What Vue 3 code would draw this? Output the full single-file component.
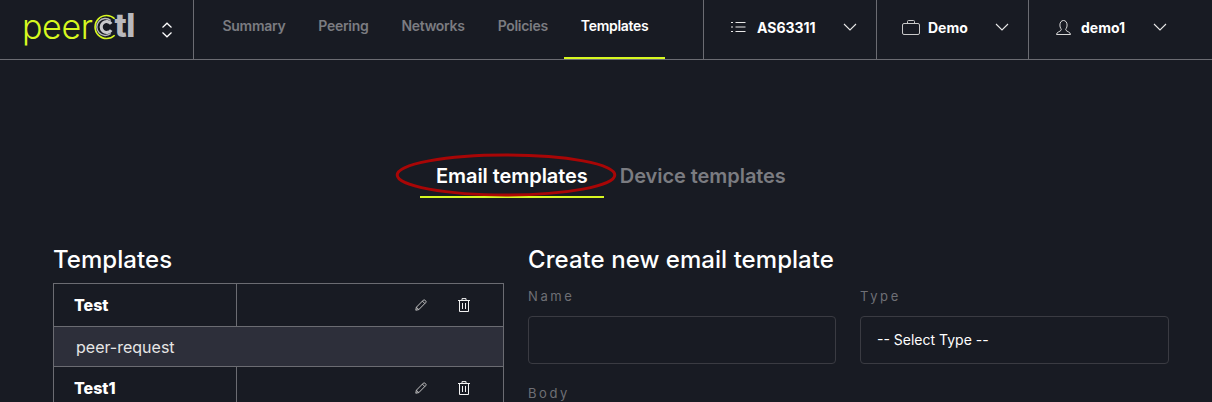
<script setup>
const links = ['Summary', 'Peering', 'Networks', 'Policies', 'Templates']
const templates = [
  { name: 'Test', type: 'peer-request' },
  { name: 'Test1', type: '' },
]
</script>

<template>
  <header class="topbar">
    <div class="brand">
      <div class="logo">
        <span class="logo-peer">peer</span>
        <svg class="logo-c" width="26" height="26" viewBox="0 0 30 30" fill="none" aria-hidden="true">
          <path d="M25 5.500A13.300 13.300 0 1 0 25 24.500" stroke="#d7f820" stroke-width="1.900" />
          <path d="M20.500 7.500A9.800 9.800 0 1 0 20.500 22.500" stroke="#b9b9bd" stroke-width="1.600" />
          <path d="M21 11.500A6.300 6.300 0 1 0 21 18.500" stroke="#c9c9cc" stroke-width="3.600" />
        </svg>
        <span class="logo-tl">tl</span>
      </div>
      <svg class="updown" width="12" height="16" viewBox="0 0 12 16" fill="none" aria-hidden="true">
        <path d="M1.500 5.500 6 1.200l4.500 4.300M1.500 10.500 6 14.800l4.500-4.300" stroke="#fff" stroke-width="1.200" />
      </svg>
    </div>

    <nav class="links">
      <a v-for="link in links" :key="link" class="link" :class="{ active: link === 'Templates' }">{{ link }}</a>
    </nav>

    <div class="menu menu-as">
      <svg width="15" height="12" viewBox="0 0 15 12" fill="none" stroke="#e8e8e8" aria-hidden="true">
        <path d="M0 1.500h2M0 6h2M0 10.500h2M4.500 1.500h10M4.500 6h10M4.500 10.500h10" />
      </svg>
      <span class="menu-text">AS63311</span>
      <svg class="chev" width="14" height="8" viewBox="0 0 14 8" fill="none" aria-hidden="true"><path d="M1 1l6 6 6-6" stroke="#e8e8e8" stroke-width="1.100" /></svg>
    </div>
    <div class="menu menu-demo">
      <svg width="18" height="15" viewBox="0 0 18 15" fill="none" stroke="#c9c9c9" aria-hidden="true">
        <rect x="0.500" y="3.500" width="17" height="11" rx="1.500" />
        <path d="M5.500 3.500V1.500a1 1 0 0 1 1-1h5a1 1 0 0 1 1 1v2" />
      </svg>
      <span class="menu-text">Demo</span>
      <svg class="chev" width="14" height="8" viewBox="0 0 14 8" fill="none" aria-hidden="true"><path d="M1 1l6 6 6-6" stroke="#e8e8e8" stroke-width="1.100" /></svg>
    </div>
    <div class="menu menu-user">
      <svg width="15" height="15" viewBox="0 0 15 15" fill="none" stroke="#d8d8d8" aria-hidden="true">
        <path d="M.5 14.500h14c0-2.500-3.600-2.800-4.600-4.300-.3-.5-.2-1 .2-1.600.7-1 1-2 1-3.600C11.100 2.300 9.600.5 7.500.5S3.900 2.300 3.900 5c0 1.600.3 2.600 1 3.600.4.600.5 1.100.2 1.600-1 1.500-4.600 1.800-4.600 4.300z" />
      </svg>
      <span class="menu-text">demo1</span>
      <svg class="chev" width="14" height="8" viewBox="0 0 14 8" fill="none" aria-hidden="true"><path d="M1 1l6 6 6-6" stroke="#e8e8e8" stroke-width="1.100" /></svg>
    </div>
  </header>

  <main class="page">
    <div class="tabs">
      <a class="tab active">Email templates</a>
      <a class="tab">Device templates</a>
      <svg class="marker" width="222" height="44" viewBox="0 0 222 44" fill="none" aria-hidden="true">
        <ellipse cx="111" cy="22" rx="108.800" ry="20" stroke="#a80606" stroke-width="3" />
      </svg>
    </div>

    <div class="columns">
      <section>
        <h2>Templates</h2>
        <div class="table">
          <template v-for="item in templates" :key="item.name">
            <div class="row">
              <div class="cell-name">{{ item.name }}</div>
              <div class="cell-actions">
                <svg width="12" height="12" viewBox="0 0 12 12" fill="none" stroke="#c4c4c4" aria-hidden="true">
                  <path d="M.8 11.200l.6-3L8.400 1.100a1 1 0 0 1 1.400 0l1 1a1 1 0 0 1 0 1.400L3.800 10.600zM1.400 8.200l2.400 2.400M7.400 2.100l2.400 2.400" />
                </svg>
                <svg width="12" height="14" viewBox="0 0 12 14" fill="none" stroke="#f2f2f2" aria-hidden="true">
                  <path d="M0 2.500h12M4 2.500V.6h4v1.900M1.500 2.500v11h9v-11M4.500 5v6M7.500 5v6" />
                </svg>
              </div>
            </div>
            <div v-if="item.type" class="row-type">{{ item.type }}</div>
          </template>
        </div>
      </section>

      <section>
        <h2>Create new email template</h2>
        <div class="fields">
          <div class="field">
            <label>Name</label>
            <div class="control"></div>
          </div>
          <div class="field">
            <label>Type</label>
            <div class="control">-- Select Type --</div>
          </div>
        </div>
        <label class="body-label">Body</label>
      </section>
    </div>
  </main>
</template>

<style>
html,
body {
  background: #181b23;
  overflow: hidden;
}
</style>

<style scoped>
.topbar {
  display: flex;
  height: 59px;
  border-bottom: 1px solid #6b6c72;
  font-family: Inter, sans-serif;
  color: #fff;
}

.brand {
  display: flex;
  align-items: center;
  width: 194px;
  padding-left: 22px;
  box-sizing: border-box;
  border-right: 1px solid #6b6c72;
}

.logo {
  display: flex;
  align-items: center;
  width: 139px;
  height: 30px;
}

.logo-peer {
  color: #d7f820;
  font-size: 34px;
  font-weight: 300;
  letter-spacing: -0.4px;
  line-height: 30px;
  margin-top: -6px;
}

.logo-c {
  flex-shrink: 0;
  margin-left: 0;
  margin-top: -5px;
}

.logo-tl {
  color: #b9b9bd;
  font-size: 32px;
  font-weight: 800;
  line-height: 30px;
  margin-left: -4px;
  margin-top: -7px;
  letter-spacing: -0.5px;
}

.links {
  display: flex;
  width: 509px;
  padding-left: 12px;
  box-sizing: border-box;
}

.link {
  display: flex;
  align-items: center;
  height: 59px;
  padding: 0 16.500px 6px;
  color: #7b7c81;
  font-size: 14px;
  font-weight: 600;
  letter-spacing: -0.3px;
  border-bottom: 2px solid transparent;
  box-sizing: border-box;
}

.link.active {
  color: #fff;
  border-bottom-color: #d7f820;
}

.menu {
  display: flex;
  align-items: center;
  box-sizing: border-box;
  border-left: 1px solid #6b6c72;
  padding-bottom: 5px;
}

.menu-as {
  width: 173px;
  padding-left: 27px;
}

.menu-demo {
  width: 152px;
  padding-left: 25px;
}

.menu-user {
  flex: 1;
  padding-left: 27px;
}

.menu-text {
  margin-left: 10px;
  font-size: 14px;
  font-weight: 700;
}

.menu-as .menu-text {
  margin-left: 11px;
}

.menu-demo .menu-text {
  margin-left: 8px;
}

.chev {
  margin-left: auto;
}

.menu-as .chev {
  margin-right: 19px;
}

.menu-demo .chev {
  margin-right: 19px;
}

.menu-user .chev {
  margin-left: 28px;
}

.page {
  padding: 0 43px 0 53px;
  font-family: Inter, sans-serif;
  color: #fff;
}

.tabs {
  position: relative;
  display: flex;
  width: 381px;
  margin: 95px 0 0 367px;
}

.tab {
  padding: 0 16px;
  height: 43px;
  box-sizing: border-box;
  line-height: 42px;
  font-size: 20px;
  font-weight: 600;
  letter-spacing: -0.06px;
  color: #7b7c81;
  white-space: nowrap;
  border-bottom: 2px solid transparent;
}

.tab.active {
  color: #fff;
  border-bottom-color: #d7f820;
}

.marker {
  position: absolute;
  left: -25px;
  top: -2px;
}

.columns {
  display: grid;
  grid-template-columns: 451px 641px;
  gap: 24px;
  margin-top: 43px;
}

h2 {
  margin: 0;
  height: 43px;
  font-size: 24px;
  font-weight: 500;
  letter-spacing: 0.05px;
  line-height: 38px;
}

.table {
  border: solid #6b6c72;
  border-width: 1px 1px 0;
  margin-top: -1px;
}

.row {
  display: grid;
  grid-template-columns: 182px 1fr;
  height: 42px;
  border-bottom: 1px solid #6b6c72;
}

.cell-name {
  padding-left: 20px;
  line-height: 42px;
  font-size: 16px;
  font-weight: 800;
}

.cell-actions {
  display: flex;
  align-items: center;
  justify-content: flex-end;
  gap: 31px;
  padding-right: 33px;
  border-left: 1px solid #6b6c72;
}

.row-type {
  height: 39px;
  padding-left: 22px;
  line-height: 41px;
  font-size: 16px;
  color: #e6e6e6;
  background: #2d2f3a;
  border-bottom: 1px solid #6b6c72;
}

.fields {
  display: grid;
  grid-template-columns: 308px 309px;
  gap: 24px;
  margin-top: 4px;
}

label {
  display: block;
  color: #6e6f75;
  font-size: 13px;
  letter-spacing: 2.600px;
  line-height: 16px;
}

.control {
  height: 48px;
  margin-top: 12px;
  padding: 0 16px;
  box-sizing: border-box;
  border: 1px solid #3a3b42;
  border-radius: 4px;
  font-size: 14px;
  line-height: 46px;
}

.body-label {
  margin-top: 21px;
}
</style>
